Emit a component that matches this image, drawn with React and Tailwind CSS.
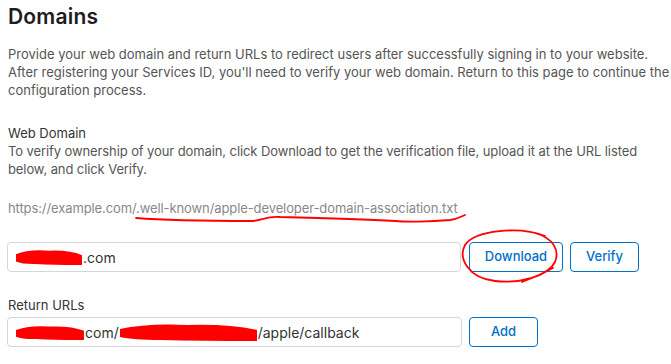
import React from "react";

const Redact = ({ w, h = 18 }) => (
  <svg width={w} height={h} viewBox={`0 0 ${w} ${h}`} className="inline-block align-middle">
    <path
      d={`M1 ${h * 0.35} Q ${w * 0.2} ${h * 0.05} ${w * 0.5} ${h * 0.15} Q ${w * 0.8} ${h * 0.1} ${w - 1} ${h * 0.4} L ${w - 1} ${h - 1} Q ${w * 0.6} ${h * 0.95} ${w * 0.3} ${h - 2} Q ${w * 0.1} ${h * 0.9} 1 ${h * 0.75} Z`}
      fill="#ff0000"
    />
  </svg>
);

const OutlineButton = ({ label, width }) => (
  <button className={`h-[30px] ${width} rounded-[4px] border border-[#0070c9] text-[13px] font-medium text-[#0070c9] bg-white`}>
    {label}
  </button>
);

export default function App() {
  return (
    <div className="relative w-[671px] h-[364px] bg-white px-[8px] font-['Inter',sans-serif] overflow-hidden">
      <h1 className="mt-[3px] text-[21px] leading-[28px] font-semibold text-[#1d1d1f] tracking-[0.2px]">Domains</h1>

      <p className="mt-[14px] text-[13px] leading-[18px] text-[#555] whitespace-nowrap">
        Provide your web domain and return URLs to redirect users after successfully signing in to your website.
        <br />
        After registering your Services ID, you'll need to verify your web domain. Return to this page to continue the
        <br />
        configuration process.
      </p>

      <div className="mt-[25px] text-[13px] leading-[18px] text-[#333]">Web Domain</div>
      <p className="text-[13px] leading-[18px] text-[#555] whitespace-nowrap tracking-[-0.1px]">
        To verify ownership of your domain, click Download to get the verification file, upload it at the URL listed
        <br />
        below, and click Verify.
      </p>

      <div className="mt-[21px] text-[13px] leading-[18px] text-[#888] tracking-[-0.1px]">
        https://example.com/.well-known/apple-developer-domain-association.txt
      </div>

      <div className="mt-[25px] flex items-center -ml-[1px]">
        <div className="h-[30px] w-[454px] rounded-[4px] border border-[#d6d6d6] flex items-center pl-[7px] text-[14px] text-[#333]">
          <Redact w={68} />
          <span>.com</span>
        </div>
        <div className="ml-[8px] flex gap-[7px]">
          <OutlineButton label="Download" width="w-[94px]" />
          <OutlineButton label="Verify" width="w-[69px]" />
        </div>
      </div>

      <div className="mt-[24px] text-[13px] leading-[18px] text-[#333]">Return URLs</div>
      <div className="mt-[3px] flex items-center -ml-[1px]">
        <div className="h-[30px] w-[455px] rounded-[4px] border border-[#d6d6d6] flex items-center pl-[7px] text-[14px] text-[#333]">
          <Redact w={70} h={17} />
          <span>com/</span>
          <Redact w={139} h={20} />
          <span>/apple/callback</span>
        </div>
        <div className="ml-[7px]">
          <OutlineButton label="Add" width="w-[69px]" />
        </div>
      </div>

      <svg className="absolute inset-0 pointer-events-none" width="671" height="364" viewBox="0 0 671 364">
        <path
          d="M136 218 C 160 220, 200 221, 253 221 C 262 220, 268 216, 280 217 C 320 218, 360 219, 395 221 C 405 222, 430 222, 450 220 C 458 219, 462 216, 465 215"
          fill="none"
          stroke="#ff0000"
          strokeWidth="1.8"
          strokeLinecap="round"
        />
        <path
          d="M545 236 C 520 226, 475 230, 465 245 C 458 258, 468 278, 495 281 C 520 284, 548 276, 555 262 C 560 250, 553 238, 535 233 M 522 282 C 533 278, 544 273, 553 268"
          fill="none"
          stroke="#ff0000"
          strokeWidth="1.8"
          strokeLinecap="round"
        />
      </svg>
    </div>
  );
}
